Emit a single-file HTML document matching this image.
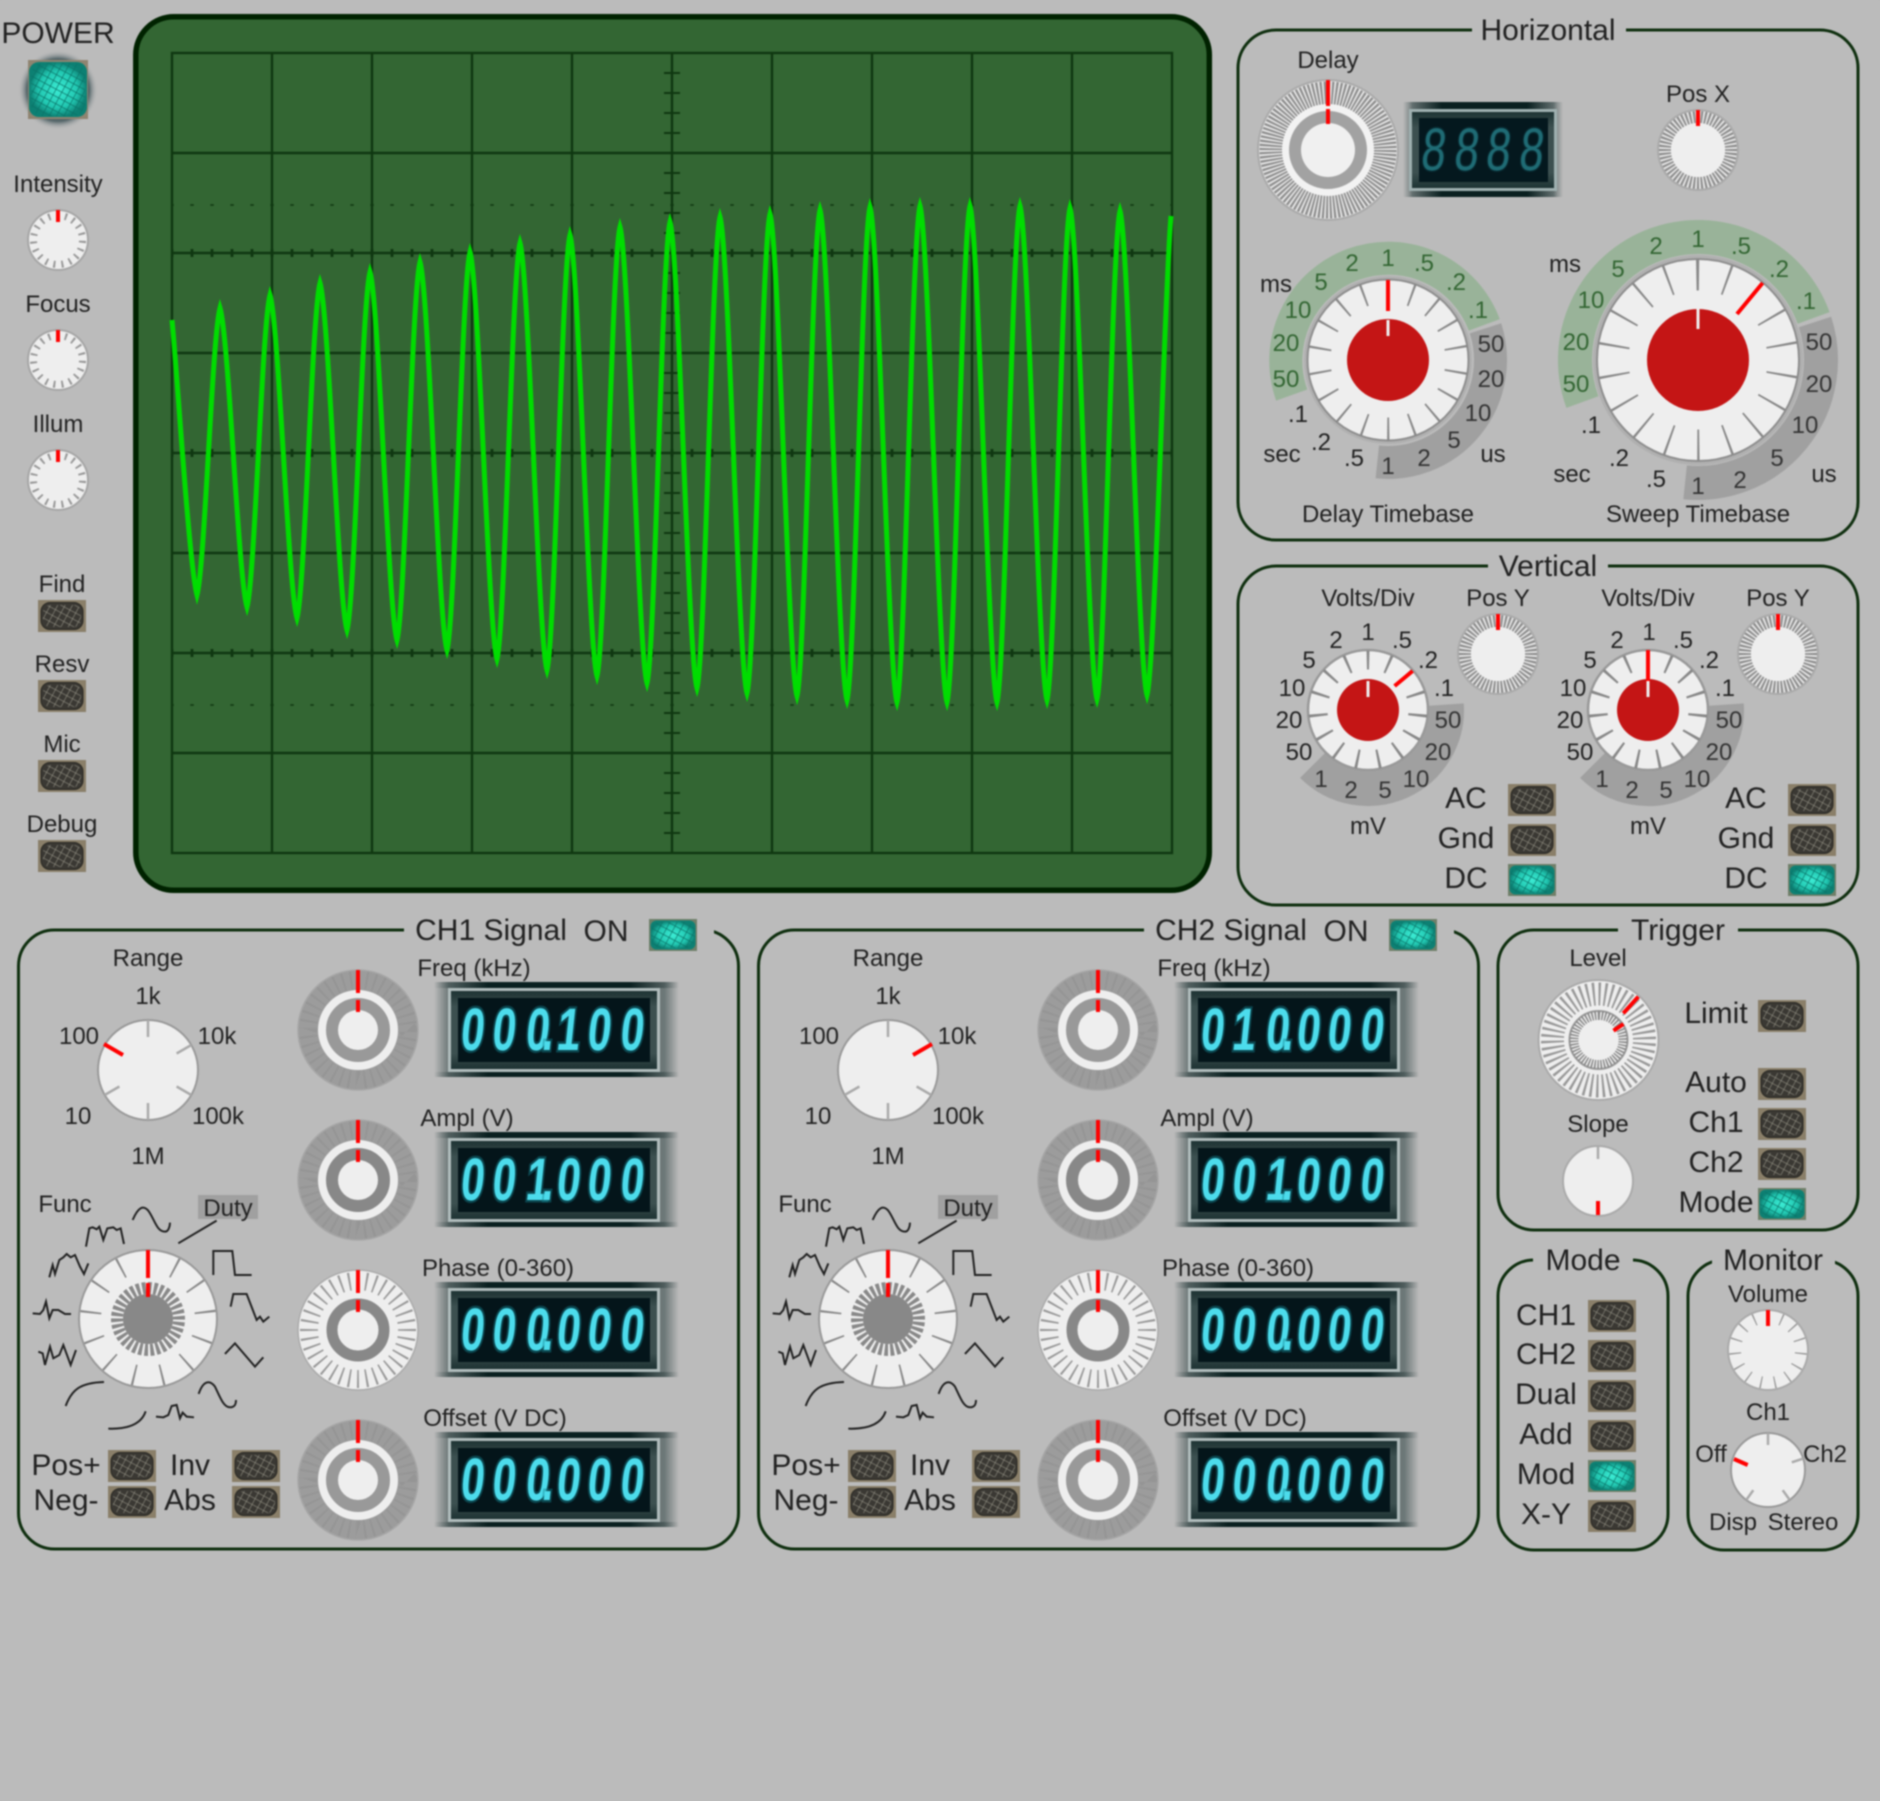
<!DOCTYPE html>
<html lang="en">
<head>
<meta charset="utf-8">
<title>Oscilloscope</title>
<style>
html,body{margin:0;padding:0;background:#bbb;width:1880px;height:1801px;overflow:hidden}
svg{display:block;filter:blur(.8px)}
text{font-family:"Liberation Sans",Arial,sans-serif;text-anchor:middle;fill:#222}
.s text,text.s{font-size:24px}
.b text,text.b{font-size:30px}
.g text{fill:#336633}
.y text{fill:#333}
.d{font-size:60px;font-weight:bold;fill:#4cdcec;stroke:#14808f;stroke-opacity:.45;stroke-width:5px;paint-order:stroke}
.dd{font-size:60px;fill:#1f6b74;stroke:#14606a;stroke-opacity:.25;stroke-width:3px;paint-order:stroke}
.p{fill:none;stroke:#0f2f0f;stroke-width:3}
</style>
</head>
<body>
<svg width="1880" height="1801" viewBox="0 0 1880 1801" xmlns="http://www.w3.org/2000/svg">
<defs>
<pattern id="wv" width="6.5" height="6.5" patternUnits="userSpaceOnUse" patternTransform="rotate(28)"><path d="M0 0H6.5M0 0V6.5" stroke="#8e8c80" stroke-width="1.3"/></pattern>
<pattern id="wl" width="6.5" height="6.5" patternUnits="userSpaceOnUse" patternTransform="rotate(28)"><path d="M0 0H6.5M0 0V6.5" stroke="#0a7367" stroke-width="1.4"/></pattern>
<radialGradient id="tl"><stop offset="0" stop-color="#3cecd4"/><stop offset=".65" stop-color="#22c8b2"/><stop offset="1" stop-color="#0d8073"/></radialGradient>
<radialGradient id="glow"><stop offset="0" stop-color="#3b4a4c"/><stop offset=".78" stop-color="#55666a"/><stop offset="1" stop-color="#bbb" stop-opacity="0"/></radialGradient>
<linearGradient id="fade"><stop offset="0" stop-color="#4a5a5a" stop-opacity="0"/><stop offset=".06" stop-color="#4a5a5a" stop-opacity=".7"/><stop offset=".94" stop-color="#4a5a5a" stop-opacity=".7"/><stop offset="1" stop-color="#4a5a5a" stop-opacity="0"/></linearGradient>
<linearGradient id="band"><stop offset="0" stop-color="#0a2020" stop-opacity="0"/><stop offset=".22" stop-color="#0a2020"/><stop offset=".8" stop-color="#0a2020"/><stop offset="1" stop-color="#0a2020" stop-opacity="0"/></linearGradient>
<linearGradient id="inn" x2="0" y2="1"><stop offset="0" stop-color="#1d3232"/><stop offset=".2" stop-color="#3c5050"/><stop offset=".8" stop-color="#3c5050"/><stop offset="1" stop-color="#1d3232"/></linearGradient>

<g id="bo">
<rect width="48" height="32" fill="#8a7f69"/>
<rect x="3" y="2.5" width="42" height="27" rx="9" fill="#3a3833" stroke="#2a2924" stroke-width="1"/>
<rect x="5" y="5" width="38" height="22" rx="7" fill="url(#wv)"/>
</g>
<g id="bl">
<rect width="48" height="32" fill="#6f7f68"/>
<rect x="1.5" y="1.5" width="45" height="29" rx="6" fill="url(#tl)"/>
<rect x="2" y="3" width="44" height="26" rx="9" fill="url(#wl)"/>
</g>

<g id="disp">
<rect x="-14" y="-6" width="245" height="95" fill="url(#fade)"/>
<rect x="-14" y="-6" width="245" height="6" fill="url(#band)"/>
<rect x="-14" y="84" width="245" height="5" fill="url(#band)"/>
<rect width="212" height="84" fill="#b0bcbc"/>
<rect x="3" y="3" width="206" height="78" fill="url(#inn)"/>
<rect x="10" y="10" width="192" height="64" fill="#04151a"/>
</g>

<g id="kA">
<circle r="60" fill="#9c9c9c" stroke="#a6a6a6" stroke-width="1.5"/>
<circle r="50" fill="none" stroke="#959595" stroke-width="18" pathLength="40" stroke-dasharray=".25 .75" transform="rotate(-90)"/>
<circle r="36" fill="#999" stroke="#eee" stroke-width="8"/>
<circle r="20" fill="#eee"/>
<path d="M0-60V-37M0-30V-18" stroke="#f00" stroke-width="4"/>
</g>
<g id="kB">
<circle r="60" fill="#9c9c9c" stroke="#a6a6a6" stroke-width="1.5"/>
<circle r="50" fill="none" stroke="#959595" stroke-width="18" pathLength="40" stroke-dasharray=".25 .75" transform="rotate(-90)"/>
<circle r="36" fill="#888" stroke="#eee" stroke-width="8"/>
<circle r="20" fill="#eee"/>
<path d="M0-60V-37M0-30V-18" stroke="#f00" stroke-width="4"/>
</g>
<g id="kP">
<circle r="60" fill="#eee" stroke="#aaa" stroke-width="1.5"/>
<circle r="49" fill="none" stroke="#999" stroke-width="18" pathLength="36" stroke-dasharray=".22 .78" stroke-dashoffset=".11" transform="rotate(-90)"/>
<circle r="26" fill="#eee" stroke="#888" stroke-width="11"/>
<path d="M0-60V-37M0-30V-18" stroke="#f00" stroke-width="4"/>
</g>
<g id="kI">
<circle r="30" fill="#eee" stroke="#a6a6a6" stroke-width="2"/>
<circle r="24.5" fill="none" stroke="#999" stroke-width="7" pathLength="19" stroke-dasharray=".25 .75" stroke-dashoffset=".125" transform="rotate(-90)"/>
<path d="M0-30V-18" stroke="#f00" stroke-width="4"/>
</g>
<g id="kPos">
<circle r="40" fill="#e4e4e4" stroke="#aaa" stroke-width="2"/>
<circle r="33" fill="none" stroke="#8c8c8c" stroke-width="12" pathLength="56" stroke-dasharray=".52 .48" stroke-dashoffset=".26" transform="rotate(-90)"/>
<circle r="27" fill="#eee"/>
<path d="M0-40V-24" stroke="#f00" stroke-width="4"/>
</g>
<g id="kV">
<circle r="60" fill="#eee" stroke="#999" stroke-width="2.5"/>
<circle r="50" fill="none" stroke="#888" stroke-width="19" pathLength="15" stroke-dasharray=".12 .88" stroke-dashoffset=".06" transform="rotate(-90)"/>
<circle r="31" fill="#c41515"/>
</g>

<g id="ch">
<rect class="p" x="18.5" y="930" width="720" height="619" rx="36"/>
<rect x="404" y="922" width="310" height="14" fill="#bbb"/>
<use href="#bl" x="649" y="919"/>

<g transform="translate(148,1070)">
<circle r="50" fill="#eee" stroke="#999" stroke-width="2"/>
<path d="M0-50V-33M43.3-25L28.6-16.5M43.3 25L28.6 16.5M0 50V33M-43.3 25L-28.6 16.5" stroke="#aaa" stroke-width="2.5"/>
</g>

<g transform="translate(148,1319)">
<circle r="69" fill="#eee" stroke="#999" stroke-width="2"/>
<circle r="57.5" fill="none" stroke="#888" stroke-width="21" pathLength="13" stroke-dasharray=".07 .93" stroke-dashoffset=".035" transform="rotate(-90)"/>
<circle r="31" fill="none" stroke="#888" stroke-width="12" pathLength="34" stroke-dasharray=".6 .4" transform="rotate(-90)"/>
<circle r="25" fill="#888"/>
<path d="M0-69V-41M0-36V-22" stroke="#f00" stroke-width="4"/>
</g>
<rect x="198" y="1195" width="60" height="24" fill="#a0a0a0"/>
<g transform="translate(0,1170) scale(.3333)" fill="none" stroke="#222" stroke-width="6">
<path d="M398 150C415 110 430 105 445 122C465 150 470 185 495 185C505 185 510 170 510 158"/>
<path d="M258 230L268 175L278 172L290 178L298 170L310 210L322 175L340 172L350 180L362 175L372 222"/>
<path d="M148 322L158 285L165 312L178 270L190 262L200 252L212 262L225 255L240 290L252 312L265 280"/>
<path d="M98 430L120 432L130 420L138 395L148 445L158 420L175 420L195 432L213 432"/>
<path d="M115 545L128 550L135 585L150 530L160 565L178 555L190 525L212 585L228 540"/>
<path d="M197 708C215 660 240 638 312 636"/>
<path d="M325 776C390 778 425 760 437 724"/>
<path d="M468 740L490 742L505 735L515 708L530 705L540 745L548 728L560 740L582 742"/>
<path d="M596 672C610 630 630 630 645 650C660 680 670 712 690 712C703 712 708 705 708 690"/>
<path d="M675 552L705 520L765 590L790 562"/>
<path d="M692 410L700 372L740 372L770 450L780 440L790 455L808 440"/>
<path d="M640 315L640 243L697 243L705 315L755 315"/>
<path d="M650 152L535 220"/>
</g>

<use href="#bo" x="108" y="1450"/><use href="#bo" x="108" y="1486"/>
<use href="#bo" x="232" y="1450"/><use href="#bo" x="232" y="1486"/>

<use href="#kA" x="358" y="1030"/>
<use href="#kB" x="358" y="1180"/>
<use href="#kP" x="358" y="1330"/>
<use href="#kA" x="358" y="1480"/>

<use href="#disp" x="448" y="988"/>
<use href="#disp" x="448" y="1138"/>
<use href="#disp" x="448" y="1288"/>
<use href="#disp" x="448" y="1438"/>
</g>
</defs>

<rect width="1880" height="1801" fill="#bbb"/>

<!-- Scope -->
<rect x="135.8" y="16.8" width="1073.5" height="873.5" rx="38" fill="#336633" stroke="#002200" stroke-width="5.5"/>
<g fill="none" stroke="#0f3711" stroke-width="2.4">
<rect x="172" y="53" width="1000" height="800"/>
<path d="M272 53V853M372 53V853M472 53V853M572 53V853M672 53V853M772 53V853M872 53V853M972 53V853M1072 53V853"/>
<path d="M172 153H1172M172 253H1172M172 353H1172M172 453H1172M172 553H1172M172 653H1172M172 753H1172"/>
<path d="M172 253H1172M172 453H1172M172 653H1172" stroke-width="8" stroke-dasharray="2.8 17.2" stroke-dashoffset="1.4"/>
<path d="M172 205H1172M172 705H1172" stroke-width="1.6" stroke-dasharray="3.5 16.5" stroke-dashoffset="1.7"/>
<path d="M672 53V853" stroke-width="16" stroke-dasharray="2 18" stroke-dashoffset="1"/>
</g>
<path fill="none" stroke="#00dd00" stroke-width="5" stroke-miterlimit="10" d="M172 320C177 370 189 565 197 595C205 565 212 338 220 308C229 338 238 577 247 607C255 577 262 325 270 295C279 325 288 588 297 618C305 588 312 313 320 283C329 313 338 600 347 630C355 600 362 302 370 272C379 302 388 610 397 640C405 610 412 292 420 262C429 292 438 620 447 650C455 620 462 282 470 252C479 282 488 629 497 659C505 629 512 273 520 243C529 273 538 640 547 670C555 640 562 265 570 235C579 265 588 646 597 676C605 646 612 257 620 227C629 257 638 653 647 683C655 653 662 252 670 222C679 252 688 658 697 688C705 658 712 247 720 217C729 247 738 663 747 693C755 663 762 244 770 214C779 244 788 666 797 696C805 666 812 240 820 210C829 240 838 670 847 700C855 670 862 237 870 207C879 237 888 672 897 702C905 672 912 236 920 206C929 236 938 672 947 702C955 672 962 236 970 206C979 236 988 672 997 702C1005 672 1012 236 1020 206C1029 236 1038 670 1047 700C1055 670 1062 238 1070 208C1079 238 1088 669 1097 699C1105 669 1112 241 1120 211C1129 241 1138 665 1147 695C1155 665 1165 280 1171 216"/>

<!-- Left column -->
<text x="58" y="43" style="font-size:30px">POWER</text>
<circle cx="58" cy="90" r="40" fill="url(#glow)"/>
<rect x="28" y="60" width="60" height="59" fill="#8f8470"/>
<rect x="29" y="62" width="58" height="55" rx="10" fill="url(#tl)"/>
<rect x="31" y="63" width="54" height="53" rx="12" fill="url(#wl)"/>
<g class="s">
<text x="58" y="192">Intensity</text>
<text x="58" y="312">Focus</text>
<text x="58" y="432">Illum</text>
<text x="62" y="592">Find</text>
<text x="62" y="672">Resv</text>
<text x="62" y="752">Mic</text>
<text x="62" y="832">Debug</text>
</g>
<use href="#kI" x="58" y="240"/><use href="#kI" x="58" y="360"/><use href="#kI" x="58" y="480"/>
<use href="#bo" x="38" y="600"/><use href="#bo" x="38" y="680"/><use href="#bo" x="38" y="760"/><use href="#bo" x="38" y="840"/>

<!-- Horizontal -->
<rect class="p" x="1238" y="30" width="620" height="510" rx="38"/>
<rect x="1472" y="22" width="154" height="16" fill="#bbb"/>
<text class="b" x="1548" y="40">Horizontal</text>
<text class="s" x="1328" y="68">Delay</text>
<g transform="translate(1328,150)">
<circle r="70" fill="#e6e6e6" stroke="#aaa" stroke-width="2"/>
<circle r="57" fill="none" stroke="#8e8e8e" stroke-width="23" pathLength="100" stroke-dasharray=".55 .45" transform="rotate(-90)"/>
<circle r="42.5" fill="#a2a2a2" stroke="#f2f2f2" stroke-width="7"/>
<circle r="27" fill="#f0f0f0"/>
<path d="M0-70V-44M0-41V-26" stroke="#f00" stroke-width="4"/>
</g>
<rect x="1403" y="102" width="160" height="95" fill="url(#fade)"/>
<rect x="1409" y="102" width="148" height="7" fill="url(#band)"/>
<rect x="1409" y="191" width="148" height="6" fill="url(#band)"/>
<rect x="1409" y="109" width="148" height="82" fill="#9fb0b0"/>
<rect x="1412" y="112" width="142" height="76" fill="url(#inn)"/>
<rect x="1419" y="118" width="129" height="64" fill="#04181e"/>
<g transform="translate(0,170) skewX(-6) scale(.72,1)"><text class="dd" x="1989 2035 2079 2125">8888</text></g>
<text class="s" x="1698" y="102">Pos X</text>
<use href="#kPos" x="1698" y="150"/>

<!-- Delay timebase -->
<g transform="translate(1388,360)" fill="none">
<path d="M-96.3 35.1A102.5 102.5 0 0 1 96.3-35.1" stroke="#99b399" stroke-width="33"/>
<path d="M97.5-31.7A102.5 102.5 0 0 1-10.7 101.9" stroke="#a0a0a0" stroke-width="33"/>
<circle r="84" fill="#b0b0b0"/>
<circle r="80.5" fill="#eee" stroke="#8e8e8e" stroke-width="2"/>
<circle r="69" stroke="#888" stroke-width="23" pathLength="18" stroke-dasharray=".085 .915" stroke-dashoffset=".042" transform="rotate(-90)"/>
<circle r="41" fill="#c41515"/>
<path d="M0-80V-49" stroke="#f00" stroke-width="4"/>
<path d="M0-40V-24" stroke="#eee" stroke-width="3"/>
</g>
<g class="s">
<text x="1276" y="292">ms</text><text x="1282" y="462">sec</text><text x="1493" y="462">us</text>
<text x="1298" y="422">.1</text><text x="1321" y="450">.2</text><text x="1354" y="466">.5</text>
<text x="1388" y="266" style="fill:#336633">1</text>
<g class="g"><text x="1321" y="290">5</text><text x="1352" y="271">2</text><text x="1424" y="271">.5</text><text x="1456" y="290">.2</text><text x="1478" y="318">.1</text><text x="1298" y="318">10</text><text x="1286" y="351">20</text><text x="1286" y="387">50</text></g>
<g class="y"><text x="1491" y="352">50</text><text x="1491" y="387">20</text><text x="1478" y="421">10</text><text x="1454" y="448">5</text><text x="1424" y="466">2</text><text x="1388" y="474">1</text></g>
<text x="1388" y="522">Delay Timebase</text>
</g>

<!-- Sweep timebase -->
<g transform="translate(1698,360)" fill="none">
<path d="M-115.6 42.1A123 123 0 0 1 115.6-42.1" stroke="#99b399" stroke-width="34"/>
<path d="M117-38A123 123 0 0 1-12.9 122.3" stroke="#a0a0a0" stroke-width="34"/>
<circle r="105" fill="#b0b0b0"/>
<circle r="101" fill="#eee" stroke="#8e8e8e" stroke-width="2"/>
<circle r="85" stroke="#888" stroke-width="31" pathLength="18" stroke-dasharray=".07 .93" stroke-dashoffset=".035" transform="rotate(-90)"/>
<circle r="51" fill="#c41515"/>
<path d="M64.6-77L39-46" stroke="#f00" stroke-width="4"/>
<path d="M0-51V-31" stroke="#eee" stroke-width="3"/>
</g>
<g class="s" transform="translate(-1,0)">
<text x="1566" y="272">ms</text><text x="1573" y="482">sec</text><text x="1825" y="482">us</text>
<text x="1592" y="433">.1</text><text x="1620" y="466">.2</text><text x="1657" y="487">.5</text>
<g class="g"><text x="1619" y="277">5</text><text x="1657" y="254">2</text><text x="1699" y="247">1</text><text x="1742" y="254">.5</text><text x="1780" y="277">.2</text><text x="1807" y="309">.1</text><text x="1592" y="308">10</text><text x="1577" y="350">20</text><text x="1577" y="392">50</text></g>
<g class="y"><text x="1820" y="350">50</text><text x="1820" y="392">20</text><text x="1806" y="433">10</text><text x="1778" y="466">5</text><text x="1741" y="488">2</text><text x="1699" y="494">1</text></g>
<text x="1699" y="522">Sweep Timebase</text>
</g>

<!-- Vertical -->
<rect class="p" x="1238" y="566" width="620" height="339" rx="38"/>
<rect x="1488" y="558" width="120" height="16" fill="#bbb"/>
<text class="b" x="1548" y="576">Vertical</text>

<g transform="translate(1368,710)" fill="none"><path d="M77.8-5.4A78 78 0 0 1-55.2 55.2" stroke="#a0a0a0" stroke-width="36"/></g>
<use href="#kV" x="1368" y="710"/>
<path d="M1412.6 671L1394.6 686" stroke="#f00" stroke-width="4"/>
<path d="M1368 681V697" stroke="#eee" stroke-width="3"/>
<g transform="translate(1648,710)" fill="none"><path d="M77.8-5.4A78 78 0 0 1-55.2 55.2" stroke="#a0a0a0" stroke-width="36"/></g>
<use href="#kV" x="1648" y="710"/>
<path d="M1648 650V682" stroke="#f00" stroke-width="4"/>
<path d="M1648 681V697" stroke="#eee" stroke-width="3"/>
<use href="#kPos" x="1498" y="654"/>
<use href="#kPos" x="1778" y="654"/>

<g class="s">
<text x="1368" y="606">Volts/Div</text><text x="1498" y="606">Pos Y</text>
<text x="1648" y="606">Volts/Div</text><text x="1778" y="606">Pos Y</text>
<g transform="translate(0,0)">
<text x="1368" y="640">1</text><text x="1336" y="648">2</text><text x="1402" y="648">.5</text><text x="1309" y="668">5</text><text x="1428" y="668">.2</text><text x="1292" y="696">10</text><text x="1444" y="696">.1</text><text x="1289" y="728">20</text><text x="1299" y="760">50</text>
<g class="y"><text x="1448" y="728">50</text><text x="1438" y="760">20</text><text x="1321" y="787">1</text><text x="1416" y="787">10</text><text x="1351" y="798">2</text><text x="1385" y="798">5</text></g>
</g>
<text x="1368" y="834">mV</text>
<g transform="translate(-1,0)">
<text x="1650" y="640">1</text><text x="1618" y="648">2</text><text x="1684" y="648">.5</text><text x="1591" y="668">5</text><text x="1710" y="668">.2</text><text x="1574" y="696">10</text><text x="1726" y="696">.1</text><text x="1571" y="728">20</text><text x="1581" y="760">50</text>
<g class="y"><text x="1730" y="728">50</text><text x="1720" y="760">20</text><text x="1603" y="787">1</text><text x="1698" y="787">10</text><text x="1633" y="798">2</text><text x="1667" y="798">5</text></g>
</g>
<text x="1648" y="834">mV</text>
</g>
<g class="b">
<text x="1466" y="808">AC</text><text x="1466" y="848">Gnd</text><text x="1466" y="888">DC</text>
<text x="1746" y="808">AC</text><text x="1746" y="848">Gnd</text><text x="1746" y="888">DC</text>
</g>
<use href="#bo" x="1508" y="784"/><use href="#bo" x="1508" y="824"/><use href="#bl" x="1508" y="864"/>
<use href="#bo" x="1788" y="784"/><use href="#bo" x="1788" y="824"/><use href="#bl" x="1788" y="864"/>

<!-- CH1 & CH2 graphics -->
<use href="#ch"/>
<use href="#ch" x="740"/>
<path d="M104 1044L123 1055" stroke="#f00" stroke-width="4"/>
<path d="M932 1044L913 1055" stroke="#f00" stroke-width="4"/>

<!-- CH1 text -->
<g class="b">
<text x="491" y="940">CH1 Signal</text><text x="606" y="941">ON</text>
<text x="66" y="1475">Pos+</text><text x="66" y="1510">Neg-</text><text x="190" y="1475">Inv</text><text x="190" y="1510">Abs</text>
</g>
<g class="s">
<text x="148" y="966">Range</text><text x="148" y="1004">1k</text><text x="79" y="1044">100</text><text x="217" y="1044">10k</text><text x="78" y="1124">10</text><text x="218" y="1124">100k</text><text x="148" y="1164">1M</text>
<text x="65" y="1212">Func</text><text x="228" y="1216">Duty</text>
<text x="474" y="976">Freq (kHz)</text><text x="467" y="1126">Ampl (V)</text><text x="498" y="1276">Phase (0-360)</text><text x="495" y="1426">Offset (V DC)</text>
</g>
<g transform="translate(0,1050) skewX(-6) scale(.7,1)"><text class="d" x="673 718 766 781 810 854 901">000.100</text></g>
<g transform="translate(0,1200) skewX(-6) scale(.7,1)"><text class="d" x="673 718 766 781 810 854 901">001.000</text></g>
<g transform="translate(0,1350) skewX(-6) scale(.7,1)"><text class="d" x="673 718 766 781 810 854 901">000.000</text></g>
<g transform="translate(0,1500) skewX(-6) scale(.7,1)"><text class="d" x="673 718 766 781 810 854 901">000.000</text></g>

<!-- CH2 text -->
<g class="b">
<text x="1231" y="940">CH2 Signal</text><text x="1346" y="941">ON</text>
<text x="806" y="1475">Pos+</text><text x="806" y="1510">Neg-</text><text x="930" y="1475">Inv</text><text x="930" y="1510">Abs</text>
</g>
<g class="s">
<text x="888" y="966">Range</text><text x="888" y="1004">1k</text><text x="819" y="1044">100</text><text x="957" y="1044">10k</text><text x="818" y="1124">10</text><text x="958" y="1124">100k</text><text x="888" y="1164">1M</text>
<text x="805" y="1212">Func</text><text x="968" y="1216">Duty</text>
<text x="1214" y="976">Freq (kHz)</text><text x="1207" y="1126">Ampl (V)</text><text x="1238" y="1276">Phase (0-360)</text><text x="1235" y="1426">Offset (V DC)</text>
</g>
<g transform="translate(740,1050) skewX(-6) scale(.7,1)"><text class="d" x="673 718 766 781 810 854 901">010.000</text></g>
<g transform="translate(740,1200) skewX(-6) scale(.7,1)"><text class="d" x="673 718 766 781 810 854 901">001.000</text></g>
<g transform="translate(740,1350) skewX(-6) scale(.7,1)"><text class="d" x="673 718 766 781 810 854 901">000.000</text></g>
<g transform="translate(740,1500) skewX(-6) scale(.7,1)"><text class="d" x="673 718 766 781 810 854 901">000.000</text></g>

<!-- Trigger -->
<rect class="p" x="1498" y="930" width="360" height="300" rx="36"/>
<rect x="1618" y="922" width="120" height="16" fill="#bbb"/>
<text class="b" x="1678" y="940">Trigger</text>
<g class="s"><text x="1598" y="966">Level</text><text x="1598" y="1132">Slope</text></g>
<g transform="translate(1598.5,1040)" fill="none">
<circle r="60" fill="#eee" stroke="#aaa" stroke-width="2"/>
<circle r="46" stroke="#999" stroke-width="23" pathLength="50" stroke-dasharray=".38 .62" transform="rotate(-90)"/>
<circle r="29" fill="#eee" stroke="#999" stroke-width="2"/>
<circle r="24.5" stroke="#888" stroke-width="9" pathLength="50" stroke-dasharray=".5 .5" transform="rotate(-90)"/>
<circle r="20" fill="#eee"/>
<path d="M39.8-43.3L24.8-26.7M25-16L15-9.3" stroke="#f00" stroke-width="4"/>
</g>
<g transform="translate(1598,1181)">
<circle r="35" fill="#eee" stroke="#aaa" stroke-width="2"/>
<path d="M0-34V-22" stroke="#aaa" stroke-width="2.5"/>
<path d="M0 20V34" stroke="#f00" stroke-width="4"/>
</g>
<g class="b">
<text x="1716" y="1023">Limit</text><text x="1716" y="1092">Auto</text><text x="1716" y="1132">Ch1</text><text x="1716" y="1172">Ch2</text><text x="1716" y="1212">Mode</text>
</g>
<use href="#bo" x="1758" y="1000"/><use href="#bo" x="1758" y="1068"/><use href="#bo" x="1758" y="1108"/><use href="#bo" x="1758" y="1148"/><use href="#bl" x="1758" y="1188"/>

<!-- Mode -->
<rect class="p" x="1498" y="1260" width="170" height="290" rx="36"/>
<rect x="1533" y="1250" width="100" height="20" fill="#bbb"/>
<text class="b" x="1583" y="1270">Mode</text>
<g class="b">
<text x="1546" y="1325">CH1</text><text x="1546" y="1364">CH2</text><text x="1546" y="1404">Dual</text><text x="1546" y="1444">Add</text><text x="1546" y="1484">Mod</text><text x="1546" y="1524">X-Y</text>
</g>
<use href="#bo" x="1588" y="1300"/><use href="#bo" x="1588" y="1340"/><use href="#bo" x="1588" y="1380"/><use href="#bo" x="1588" y="1420"/><use href="#bl" x="1588" y="1460"/><use href="#bo" x="1588" y="1500"/>

<!-- Monitor -->
<rect class="p" x="1688" y="1260" width="170" height="290" rx="36"/>
<rect x="1712" y="1250" width="123" height="24" fill="#bbb"/>
<text class="b" x="1773" y="1270">Monitor</text>
<g class="s">
<text x="1768" y="1302">Volume</text><text x="1768" y="1420">Ch1</text>
<text x="1711" y="1462">Off</text><text x="1825" y="1462">Ch2</text>
<text x="1733" y="1530">Disp</text><text x="1803" y="1530">Stereo</text>
</g>
<g transform="translate(1768,1350)" fill="none">
<circle r="40" fill="#eee" stroke="#aaa" stroke-width="2"/>
<circle r="33" stroke="#999" stroke-width="12" pathLength="15" stroke-dasharray=".1 .9" stroke-dashoffset=".05" transform="rotate(-90)"/>
<path d="M0-40V-24" stroke="#f00" stroke-width="4"/>
</g>
<g transform="translate(1768,1470)" fill="none">
<circle r="37" fill="#eee" stroke="#999" stroke-width="2"/>
<path d="M0-37V-25M35.2-11.4L23.8-7.7M21.7 29.9L14.7 20.2M-21.7 29.9L-14.7 20.2" stroke="#aaa" stroke-width="2.5"/>
<path d="M-34-11L-20.3-5" stroke="#f00" stroke-width="4"/>
</g>
</svg>
</body>
</html>
